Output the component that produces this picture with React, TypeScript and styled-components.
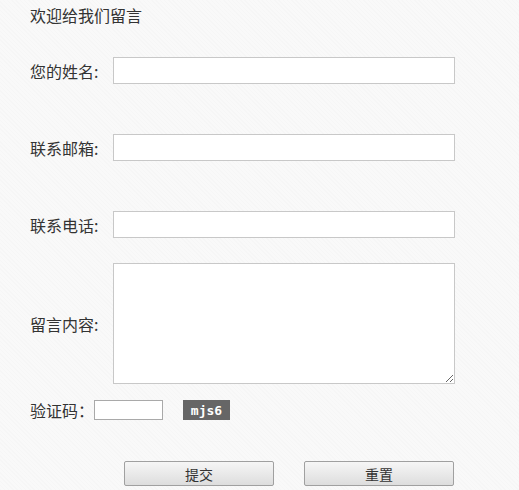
import React from "react";
import styled, { createGlobalStyle } from "styled-components";

const Global = createGlobalStyle`
  html, body {
    margin: 0;
    padding: 0;
  }
  body {
    background-color: #f9f9f9;
    background-image: repeating-linear-gradient(
      45deg,
      rgba(0, 0, 0, 0.01) 0px,
      rgba(0, 0, 0, 0.01) 1px,
      transparent 1px,
      transparent 3px
    );
    min-height: 490px;
    font-family: "Noto Sans CJK SC", "Microsoft YaHei", sans-serif;
    color: #333;
  }
`;

const Page = styled.div`
  padding-left: 30px;
  display: flex;
  flex-direction: column;
`;

const Title = styled.div`
  font-size: 16px;
  line-height: 30px;
  height: 30px;
  color: #333;
`;

const Row = styled.div<{ $top: number }>`
  display: flex;
  align-items: center;
  margin-top: ${(p) => p.$top}px;
`;

const Label = styled.label`
  width: 83px;
  font-size: 16px;
  color: #333;
  flex-shrink: 0;
`;

const TextInput = styled.input`
  box-sizing: border-box;
  width: 342px;
  height: 27px;
  border: 1px solid #c8c8c8;
  background: #fff;
  margin: 0;
  padding: 0 4px;
  outline: none;
`;

const TextArea = styled.textarea`
  box-sizing: border-box;
  width: 342px;
  height: 121px;
  border: 1px solid #c8c8c8;
  background: #fff;
  margin: 0;
  padding: 4px;
  outline: none;
`;

const CodeLabel = styled.label`
  width: 64px;
  font-size: 16px;
  color: #333;
  flex-shrink: 0;
`;

const CodeInput = styled.input`
  box-sizing: border-box;
  width: 69px;
  height: 20px;
  border: 1px solid #a9a9a9;
  background: #fff;
  margin: 0;
  padding: 0 2px;
  outline: none;
`;

const Captcha = styled.span`
  margin-left: 20px;
  width: 47px;
  height: 20px;
  background: #666;
  color: #fff;
  font-family: "DejaVu Sans Mono", "Liberation Mono", monospace;
  font-size: 13px;
  font-weight: bold;
  display: flex;
  align-items: center;
  justify-content: center;
`;

const Buttons = styled.div`
  display: flex;
  gap: 30px;
  margin-top: 39px;
  padding-left: 94px;
`;

const Button = styled.button`
  box-sizing: border-box;
  width: 150px;
  height: 25px;
  border: 1px solid #a0a0a0;
  border-radius: 2px;
  background: linear-gradient(#f6f6f6, #dddddd);
  font-family: "Noto Sans CJK SC", sans-serif;
  font-size: 14px;
  color: #333;
  padding: 0;
  cursor: pointer;
`;

export default function App() {
  return (
    <>
      <Global />
      <Page>
        <Title>欢迎给我们留言</Title>
        <Row $top={27}>
          <Label>您的姓名:</Label>
          <TextInput type="text" />
        </Row>
        <Row $top={50}>
          <Label>联系邮箱:</Label>
          <TextInput type="text" />
        </Row>
        <Row $top={50}>
          <Label>联系电话:</Label>
          <TextInput type="text" />
        </Row>
        <Row $top={25}>
          <Label>留言内容:</Label>
          <TextArea />
        </Row>
        <Row $top={14}>
          <CodeLabel>验证码：</CodeLabel>
          <CodeInput type="text" />
          <Captcha>mjs6</Captcha>
        </Row>
        <Buttons>
          <Button type="button">提交</Button>
          <Button type="button">重置</Button>
        </Buttons>
      </Page>
    </>
  );
}
